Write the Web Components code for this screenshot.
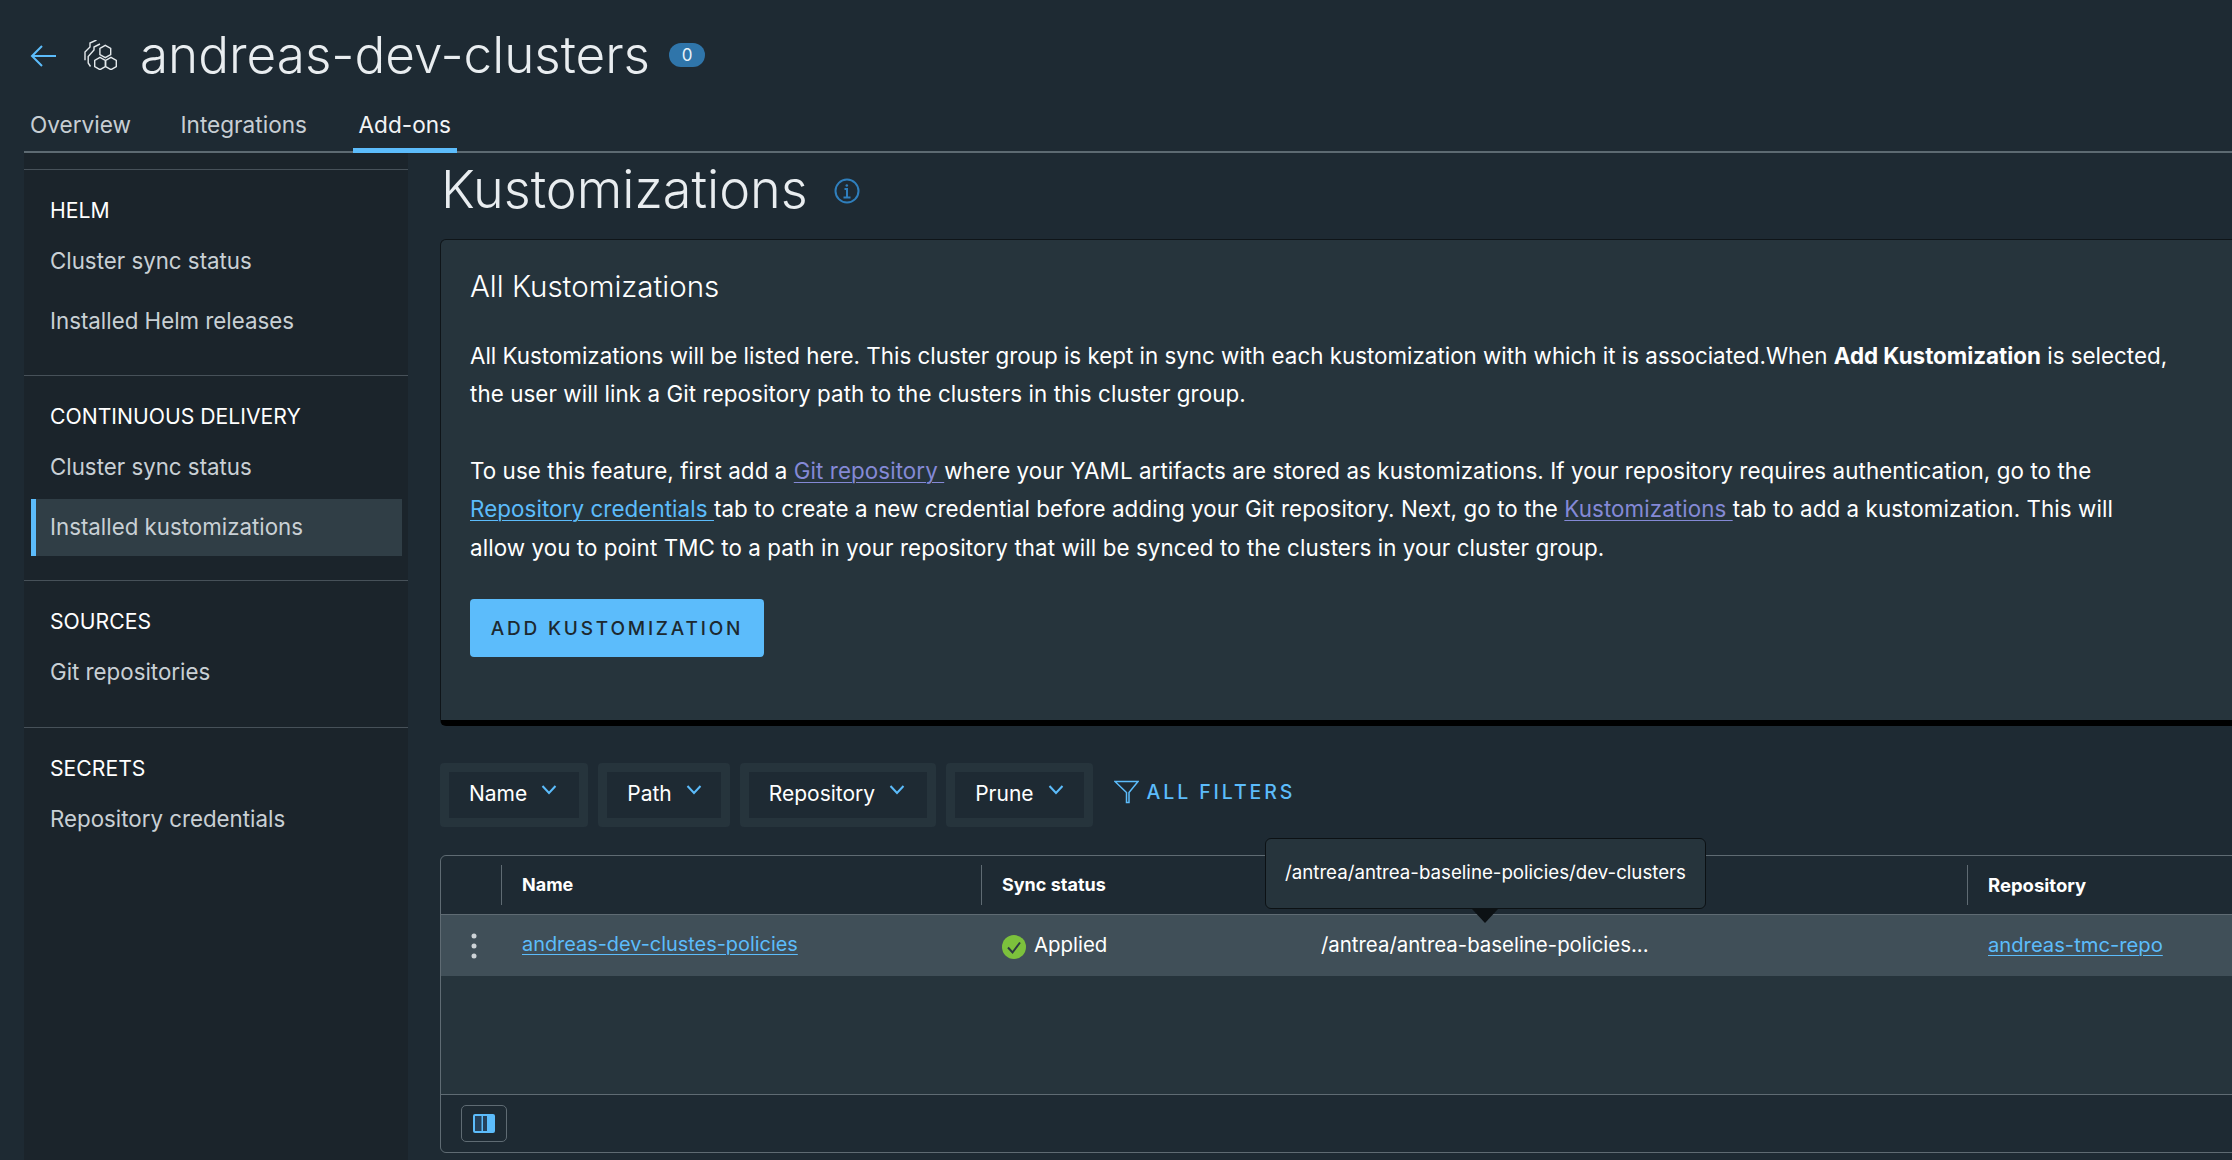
<!DOCTYPE html>
<html lang="en"><head><meta charset="utf-8"><title>Kustomizations</title>
<style>
html,body{margin:0;padding:0;height:100%;overflow:hidden;background:#1e2a33;color:#fff;font-family:Inter,"Liberation Sans",sans-serif}
</style></head><body>
<app-shell>
  <page-header slot="header" title-text="andreas-dev-clusters" count="0"></page-header>
  <tab-bar slot="tabs">
    <tab-link>Overview</tab-link><tab-link>Integrations</tab-link><tab-link active>Add-ons</tab-link>
  </tab-bar>
  <side-nav slot="nav">
    <nav-group heading="HELM" style="--pb:25px"><nav-item>Cluster sync status</nav-item><nav-item>Installed Helm releases</nav-item></nav-group>
    <nav-group heading="CONTINUOUS DELIVERY" style="--pb:24px"><nav-item>Cluster sync status</nav-item><nav-item active>Installed kustomizations</nav-item></nav-group>
    <nav-group heading="SOURCES" style="--pb:26px"><nav-item>Git repositories</nav-item></nav-group>
    <nav-group heading="SECRETS"><nav-item>Repository credentials</nav-item></nav-group>
  </side-nav>
  <main-panel slot="main">
    <page-title>Kustomizations</page-title>
    <info-card heading="All Kustomizations">
      <p>All Kustomizations will be listed here. This cluster group is kept in sync with each kustomization with which it is associated.When <b>Add Kustomization</b> is selected,<br><span class="w">the user will link a Git repository path to the clusters in this cluster group.</span></p>
      <p class="w">To use this feature, first add a <a class="v">Git repository </a>where your YAML artifacts are stored as kustomizations. If your repository requires authentication, go to the<br><a>Repository credentials </a>tab to create a new credential before adding your Git repository. Next, go to the <a class="v">Kustomizations </a>tab to add a kustomization. This will<br>allow you to point TMC to a path in your repository that will be synced to the clusters in your cluster group.</p>
      <style>
        info-card p{margin:0 0 38px;font-size:22.37px;line-height:38.4px;white-space:nowrap;color:#fff}
        info-card .w{letter-spacing:.08px}
        info-card b{font-weight:700}
        info-card a{color:#5cbcfb;text-decoration:underline;text-underline-offset:3px;text-decoration-thickness:1px}
        info-card a.v{color:#8489d6}
      </style>
      <cta-button slot="action">ADD KUSTOMIZATION</cta-button>
    </info-card>
    <filter-row>
      <filter-chip style="--pr:22px">Name</filter-chip><filter-chip style="--pr:19px">Path</filter-chip><filter-chip style="--pr:22px">Repository</filter-chip><filter-chip style="--pr:20px">Prune</filter-chip>
      <all-filters>ALL FILTERS</all-filters>
    </filter-row>
    <data-grid></data-grid>
  </main-panel>
</app-shell>
<script>
function def(name, html){
  customElements.define(name, class extends HTMLElement{
    connectedCallback(){
      if(this.shadowRoot) return;
      const r=this.attachShadow({mode:'open'});
      r.innerHTML=typeof html==='function'?html(this):html;
    }
  });
}
def('app-shell',`<style>
:host{display:grid;grid-template-columns:24px 384px 1fr;grid-template-rows:98px 55px 1fr;height:1160px;width:2232px;overflow:hidden}
.h{grid-column:1/4}.t{grid-column:1/4;padding-left:24px}.n{grid-column:2}.m{grid-column:3;min-width:0;overflow:hidden}
</style>
<div class="h"><slot name="header"></slot></div><div class="t"><slot name="tabs"></slot></div>
<div class="n"><slot name="nav"></slot></div><div class="m"><slot name="main"></slot></div>`);

def('page-header',el=>`<style>
:host{display:flex;align-items:center;height:98px;padding:12px 0 0 30px;box-sizing:border-box}
.back{width:26px;height:22px;margin:2px 28px 0 0;flex:none}
.ic{width:34px;height:30px;margin-right:22px;flex:none}
h1{margin:0;font-size:51.2px;font-weight:300;color:#e9edf0;line-height:60px;letter-spacing:0;white-space:nowrap;position:relative;top:-1px}
.b{margin-left:19px;width:36px;height:24px;border-radius:12px;background:#2f75aa;color:#e8f2f9;font-size:17px;display:flex;align-items:center;justify-content:center}
</style>
<svg class="back" viewBox="0 0 26 22" fill="none" stroke="#5cbcfb" stroke-width="2"><path d="M26 11H2M12 1 2 11l10 10"/></svg>
<svg class="ic" viewBox="84 43 34 30" fill="none" stroke="#e4e9ec" stroke-width="1.4"><path d="M105.3 48.3l5.4 3.1v6.200l-5.4 3.1-5.4-3.1v-6.200z"/><path d="M100 60.300l5.300 3.100v6.200l-5.300 3.100-5.300-3.100v-6.200z"/><path d="M111 60.300l5.300 3.100v6.200l-5.300 3.100-5.300-3.100v-6.200z"/><path d="M85 63.300V55l5-5v-4l6.500-3"/><path d="M90.500 69.500l-2.300-3.500v-6.500l5.800-6.500V50l6-3"/></svg>
<h1>${el.getAttribute('title-text')}</h1><span class="b">${el.getAttribute('count')}</span>`);

def('tab-bar',`<style>:host{display:flex;gap:37.5px;height:55px;box-sizing:border-box;border-bottom:2px solid #5d6a72}</style><slot></slot>`);
def('tab-link',el=>`<style>
:host{display:block;height:55px;box-sizing:border-box;padding:12px 6px 0;font-size:22.6px;line-height:30px;color:${el.hasAttribute('active')?'#f2f4f5':'#c7ced3'};white-space:nowrap}
:host([active]){border-bottom:5px solid #5cbcfb;margin-left:2px}
</style><slot></slot>`);

def('side-nav',`<style>:host{display:block;height:100%;background:#1b242b;padding-top:16px;box-sizing:border-box}</style><slot></slot>`);
def('nav-group',el=>`<style>
:host{display:block;border-top:1.5px solid #475159;padding:25px 0 var(--pb,24px)}
h2{margin:0 0 8px 26px;font-size:21.2px;font-weight:400;line-height:30px;color:#fff}
.l{display:flex;flex-direction:column;gap:3px}
</style><h2>${el.getAttribute('heading')}</h2><div class="l"><slot></slot></div>`);
def('nav-item',`<style>
:host{display:block;height:57px;box-sizing:border-box;margin:0 6px 0 7px;padding-left:14px;border-left:5px solid transparent;font-size:22.3px;line-height:55px;color:#c9d0d5;white-space:nowrap}
:host([active]){background:#303e46;border-left-color:#5cbcfb}
</style><slot></slot>`);

def('main-panel',`<style>:host{display:block;padding-left:32px;width:1850px;box-sizing:content-box}</style><slot></slot>`);
def('page-title',`<style>
:host{display:flex;align-items:center;height:86px;padding-left:1px;padding-bottom:13px;box-sizing:border-box}
h2{margin:0;font-size:52.2px;font-weight:300;color:#e9edf0;line-height:73px;white-space:nowrap}
svg{width:26px;height:26px;margin:2px 0 0 26px}
</style><h2><slot></slot></h2>
<svg viewBox="0 0 26 26" fill="none" stroke="#2f7fbd" stroke-width="2"><circle cx="13" cy="13" r="11.500"/><path d="M9.500 19.500h7M13 19.500V11h-2.500"/><circle cx="12.800" cy="7.500" r="1.300" fill="#2f7fbd" stroke="none"/></svg>`);
def('info-card',el=>`<style>
:host{display:block;background:#26343c;border:1.5px solid #0f1519;border-bottom:6px solid #000;border-radius:6px;padding:27px 30px 62px 29px;box-sizing:border-box;height:487px}
h3{margin:0 0 32px;font-size:29.5px;font-weight:300;line-height:38px;color:#fff;white-space:nowrap}
.a{margin-top:-6px}
</style><h3>${el.getAttribute('heading')}</h3><slot></slot><div class="a"><slot name="action"></slot></div>`);
def('cta-button',`<style>
:host{display:inline-flex;align-items:center;justify-content:center;width:294px;height:58px;background:#5cbcfb;border-radius:4px;color:#1d2930;font-size:19px;font-weight:500;letter-spacing:2.800px;white-space:nowrap}
</style><slot></slot>`);
def('filter-row',`<style>:host{display:flex;align-items:center;gap:10px;margin-top:37px;height:64px}</style><slot></slot>`);
def('filter-chip',`<style>
:host{display:block;background:#26343c;border-radius:4px;padding:9px}
.i{display:flex;align-items:center;height:46px;background:#1e2a33;padding:0 var(--pr,19px) 4px 20px;box-sizing:border-box;font-size:21px;color:#fff;white-space:nowrap}
svg{width:16px;height:10px;margin:-6px 0 0 14px}
</style><div class="i"><slot></slot><svg viewBox="0 0 16 10" fill="none" stroke="#5cbcfb" stroke-width="2"><path d="M1.500 1 8 8l6.500-7"/></svg></div>`);
def('all-filters',`<style>
:host{display:flex;align-items:center;margin-left:11px;padding-bottom:6px;color:#5cbcfb;font-size:19.500px;font-weight:500;letter-spacing:2.900px;white-space:nowrap}
svg{width:25px;height:24px;margin:0 8px 0 0}
</style><svg viewBox="0 0 25 24" fill="none" stroke="#5cbcfb" stroke-width="1.500"><path d="M1 1.500h23l-9 11v10h-2.500v-10z"/></svg><slot></slot>`);

def('data-grid',`<style>
:host{display:block;position:relative;margin-top:28px;height:298px;box-sizing:border-box;border:1.5px solid #5f6b73;border-radius:6px;background:#26343c}
.head,.row{display:grid;grid-template-columns:60px 480px 321px 665px 1fr}
.head{height:58px;background:#1e2a33;border-bottom:1.5px solid #5f6b73;box-sizing:content-box;border-radius:6px 6px 0 0;align-items:center}
.hc{height:40px;line-height:40px;border-left:1.5px solid #5f6b73;padding-left:20px;font-size:18px;font-weight:700;color:#fff;white-space:nowrap}
.hc.rp{font-size:18.500px}
.hc:first-child{border:0}
.row{height:61px;background:#404f58;align-items:center}
.c{padding-left:21px;padding-bottom:3px;box-sizing:border-box;white-space:nowrap;color:#fff;font-size:20.4px;display:flex;align-items:center}
.c a{color:#5cbcfb;text-decoration:underline;text-underline-offset:3px;text-decoration-thickness:1px}
.n{font-size:19.9px}
.r{font-size:20.2px}
.dots{padding:0 0 0 6px;justify-content:center;}
.dots svg{width:6px;height:26px}
.chk{width:24px;height:24px;margin-right:8px;flex:none;position:relative;top:3px;}
.p{padding-left:19px}
.empty{height:118px}
.foot{height:58px;background:#1e2a33;border-top:1.5px solid #5f6b73;border-radius:0 0 6px 6px;box-sizing:border-box;padding:10px 0 0 20px}
.cb{width:46px;height:37px;border:1.5px solid #5f6b73;border-radius:5px;box-sizing:border-box;display:flex;align-items:center;justify-content:center}
.cb svg{width:22px;height:19px}
.tip{position:absolute;left:824px;top:-18px;width:441px;height:71px;box-sizing:border-box;background:#26343c;border:1.5px solid #0c1114;border-radius:6px;color:#fff;font-size:18.7px;line-height:68px;padding:0 0 0 19px;white-space:nowrap}
.tip svg{position:absolute;left:206px;bottom:-14.500px;width:26px;height:14px}
</style>
<div class="head"><div class="hc"></div><div class="hc">Name</div><div class="hc">Sync status</div><div class="hc"></div><div class="hc rp">Repository</div></div>
<div class="row">
  <div class="c dots"><svg viewBox="0 0 6 26"><circle cx="3" cy="3" r="2.500" fill="#cdd3d7"/><circle cx="3" cy="13" r="2.500" fill="#cdd3d7"/><circle cx="3" cy="23" r="2.500" fill="#cdd3d7"/></svg></div>
  <div class="c n"><a>andreas-dev-clustes-policies</a></div>
  <div class="c"><svg class="chk" viewBox="0 0 24 24"><circle cx="12" cy="12" r="12" fill="#7cc13c"/><path d="M6 12.500l4.500 5L18 7.500" fill="none" stroke="#2c3a42" stroke-width="2"/></svg>Applied</div>
  <div class="c p">/antrea/antrea-baseline-policies...</div>
  <div class="c r"><a>andreas-tmc-repo</a></div>
</div>
<div class="empty"></div>
<div class="foot"><div class="cb"><svg viewBox="0 0 22 19"><rect width="22" height="19" rx="2" fill="#5cbcfb"/><rect x="2" y="2" width="6.500" height="15" fill="#26415a"/><rect x="10" y="2" width="4" height="15" fill="#26415a"/></svg></div></div>
<div class="tip">/antrea/antrea-baseline-policies/dev-clusters<svg viewBox="0 0 26 14"><path d="M0 0h26L13 14z" fill="#0c1114"/></svg></div>`);
</script>
</body></html>
